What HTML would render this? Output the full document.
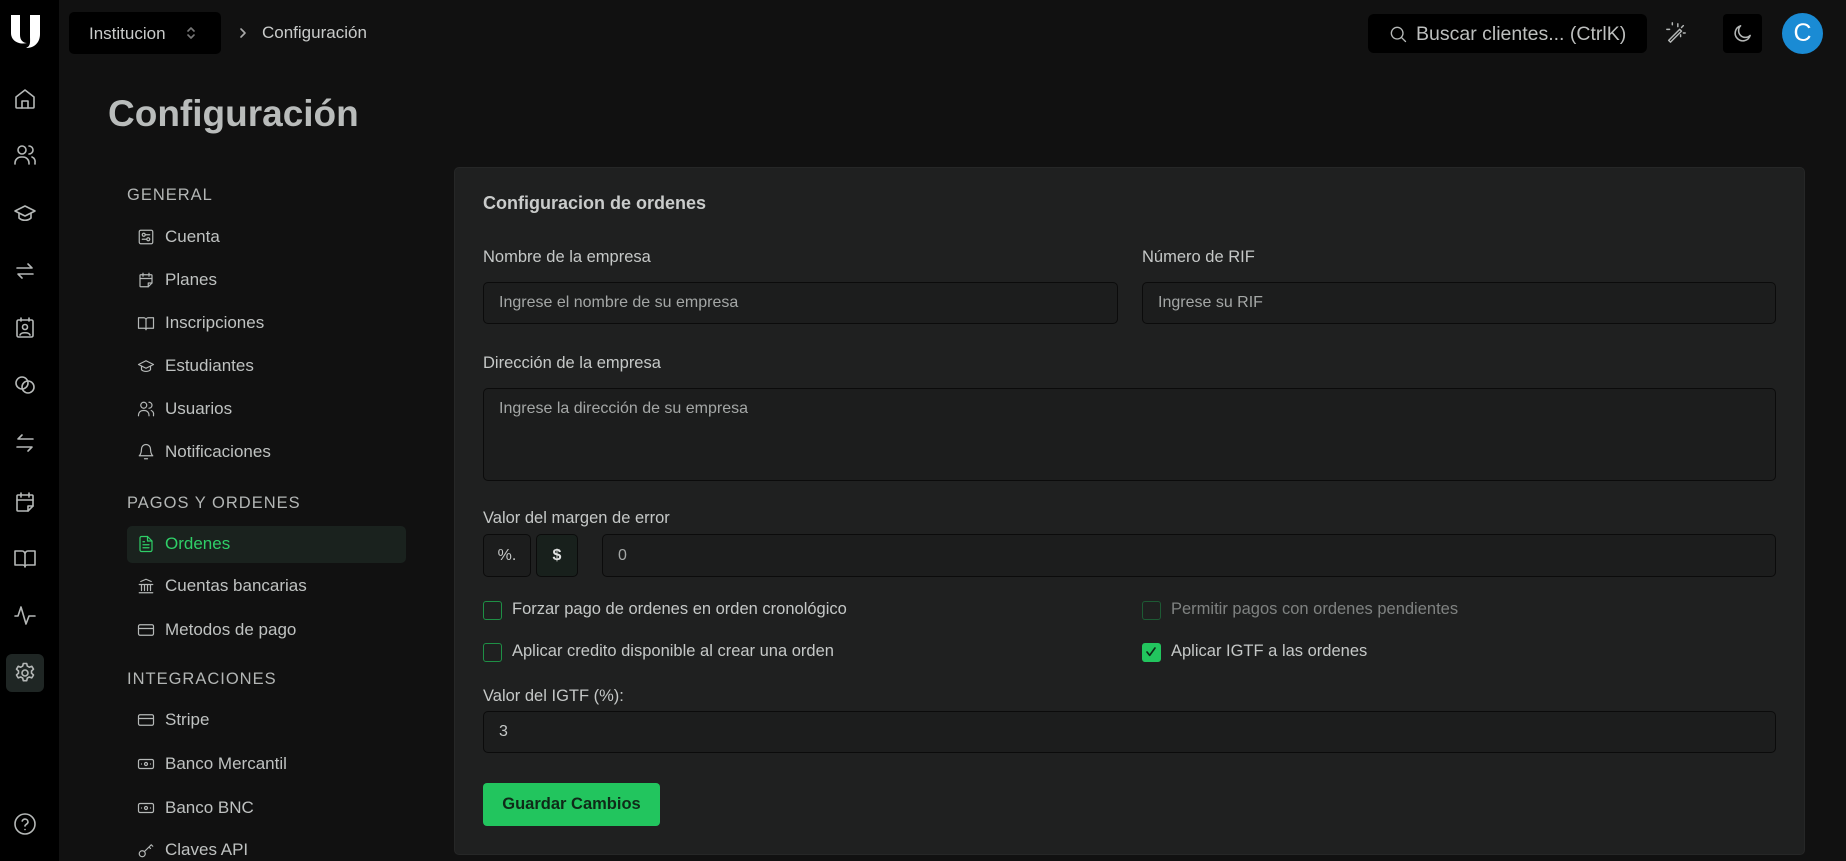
<!DOCTYPE html>
<html><head><meta charset="utf-8"><style>
*{box-sizing:border-box;margin:0;padding:0}
body{width:1846px;height:861px;overflow:hidden;background:#111111;font-family:"Liberation Sans",sans-serif;color:#c9cbca;position:relative}
.abs{position:absolute}
.rail{left:0;top:0;width:59px;height:861px;background:#000}
.ri{position:absolute;left:13px;width:24px;height:24px}
svg{fill:none;stroke:#b5b8b7;stroke-width:1.6;stroke-linecap:round;stroke-linejoin:round}
.nav{position:absolute;left:137px;font-size:17px;color:#bfc2c1;display:flex;align-items:center}
.nav svg{width:18px;height:18px;margin-right:10px}
.sec{position:absolute;left:127px;font-size:16.5px;letter-spacing:1px;color:#b3b6b5}
.lbl{position:absolute;font-size:16.5px;color:#c5c8c7}
.inp{position:absolute;background:#1c1d1d;border:1px solid #0b0b0b;border-radius:5px;font-size:16px;color:#a4a7a6;padding-left:15px;display:flex;align-items:center}
.cb{position:absolute;width:19px;height:19px;border:1.5px solid #1e8f45;border-radius:3px}
.ct{position:absolute;font-size:16.5px;color:#c5c8c7}
</style></head><body>
<div class="abs rail"></div>
<div class="abs" style="left:10px;top:14px;width:32px;height:36px;">
<svg viewBox="0 0 32 36" style="width:32px;height:36px;stroke:none;fill:#fff"><path d="M1 1h9v20c0 5 3 8 7 8-8 2-16-2-16-10z"/><path d="M20 1h10v19c0 9-6 14-14 14 5-2 4-6 4-12z"/></svg></div>
<svg class="ri" style="top:87px" viewBox="0 0 24 24"><path d="M3 10l9-7 9 7v10a1 1 0 0 1-1 1H4a1 1 0 0 1-1-1z"/><path d="M9 21v-7h6v7"/></svg>
<svg class="ri" style="top:143px" viewBox="0 0 24 24"><circle cx="9" cy="7" r="4"/><path d="M2 21v-1a6 6 0 0 1 6-6h2a6 6 0 0 1 6 6v1"/><path d="M16 3a4 4 0 0 1 0 8M19 14a5 5 0 0 1 3 6v1"/></svg>
<svg class="ri" style="top:201px" viewBox="0 0 24 24"><path d="M22 10L12 5 2 10l10 5 10-5z"/><path d="M6 12v5c3 3 9 3 12 0v-5"/></svg>
<svg class="ri" style="top:259px" viewBox="0 0 24 24"><path d="M4 9h15l-4-4M20 15H5l4 4"/></svg>
<svg class="ri" style="top:316px" viewBox="0 0 24 24"><rect x="4" y="4" width="16" height="17" rx="1.5"/><path d="M8 2v3M16 2v3"/><circle cx="12" cy="11" r="2.5"/><path d="M7 19c1-3 9-3 10 0"/></svg>
<svg class="ri" style="top:373px" viewBox="0 0 24 24"><circle cx="9" cy="10" r="6"/><circle cx="15" cy="14" r="6"/></svg>
<svg class="ri" style="top:431px" viewBox="0 0 24 24"><path d="M20 8H5l4-4M4 16h15l-4 4"/></svg>
<svg class="ri" style="top:490px" viewBox="0 0 24 24"><path d="M15 21H5a1 1 0 0 1-1-1V6a1 1 0 0 1 1-1h14a1 1 0 0 1 1 1v10z"/><path d="M8 3v4M16 3v4M4 10h16M15 21v-5h5"/></svg>
<svg class="ri" style="top:546px" viewBox="0 0 24 24"><path d="M2 5h7a3 3 0 0 1 3 3v13a2 2 0 0 0-2-2H2zM22 5h-7a3 3 0 0 0-3 3v13a2 2 0 0 1 2-2h8z"/></svg>
<svg class="ri" style="top:603px" viewBox="0 0 24 24"><path d="M2 13h3l3-9 5 17 3-8h6"/></svg>
<div class="abs" style="left:6px;top:654px;width:38px;height:38px;background:#1f2624;border-radius:6px"></div>
<svg class="ri" style="top:661px" viewBox="0 0 24 24"><circle cx="12" cy="12" r="3"/><path d="M10.3 2.5h3.4l.6 2.6 2 1.1 2.5-.9 1.7 2.9-2 1.8v2.2l2 1.8-1.7 2.9-2.5-.9-2 1.1-.6 2.6h-3.4l-.6-2.6-2-1.1-2.5.9-1.7-2.9 2-1.8v-2.2l-2-1.8 1.7-2.9 2.5.9 2-1.1z"/></svg>
<svg class="ri" style="top:812px" viewBox="0 0 24 24"><circle cx="12" cy="12" r="10"/><path d="M9.2 9a3 3 0 0 1 5.8 1c0 2-3 2.5-3 4"/><path d="M12 17.5h.01"/></svg>

<div class="abs" style="left:69px;top:12px;width:152px;height:42px;background:#000;border-radius:5px;font-size:17px;color:#c9cbca;padding:12px 0 0 20px">Institucion</div>
<svg class="abs" style="left:184px;top:25px;width:14px;height:16px;stroke:#777" viewBox="0 0 14 16"><path d="M4 6l3-3 3 3M4 10l3 3 3-3"/></svg>
<svg class="abs" style="left:236px;top:26px;width:14px;height:14px;stroke:#aaa" viewBox="0 0 14 14"><path d="M5 3l4 4-4 4"/></svg>
<div class="abs" style="left:262px;top:23px;font-size:17px;color:#c9cbca">Configuración</div>
<div class="abs" style="left:1368px;top:14px;width:279px;height:39px;background:#000;border-radius:6px;font-size:19.5px;color:#bdbfbe;padding:9px 0 0 48px">Buscar clientes... (CtrlK)</div>
<svg class="abs" style="left:1388px;top:24px;width:20px;height:20px" viewBox="0 0 24 24"><circle cx="11" cy="11" r="7"/><path d="M21 21l-5-5"/></svg>
<svg class="abs" style="left:1665px;top:22px;width:22px;height:22px" viewBox="0 0 24 24"><path d="M4 20L16 8l2 2L6 22z"/><path d="M14 5V2M18 6l2-2M5 8H2M8 3V1M20 12h2M17 14v2"/></svg>
<div class="abs" style="left:1723px;top:14px;width:39px;height:39px;background:#000;border-radius:4px"></div>
<svg class="abs" style="left:1731px;top:22px;width:23px;height:23px" viewBox="0 0 24 24"><path d="M20 14A8 8 0 1 1 10 4a6 6 0 0 0 10 10z"/></svg>
<div class="abs" style="left:1782px;top:13px;width:41px;height:41px;border-radius:50%;background:#1a8bd4;color:#fff;font-size:25px;text-align:center;line-height:41px">C</div>

<div class="abs" style="left:108px;top:93px;font-size:37px;font-weight:bold;color:#b9bcbb">Configuración</div>

<div class="sec" style="top:186px">GENERAL</div>
<div class="nav" style="top:227px"><svg viewBox="0 0 24 24"><rect x="3" y="3" width="18" height="18" rx="2"/><circle cx="9" cy="9" r="2"/><circle cx="15" cy="15" r="2"/><path d="M11 9h6M7 15h6"/></svg>Cuenta</div>
<div class="nav" style="top:270px"><svg viewBox="0 0 24 24"><path d="M15 21H5a1 1 0 0 1-1-1V6a1 1 0 0 1 1-1h14a1 1 0 0 1 1 1v10z"/><path d="M8 3v4M16 3v4M4 10h16M15 21v-5h5"/></svg>Planes</div>
<div class="nav" style="top:313px"><svg viewBox="0 0 24 24"><path d="M2 5h7a3 3 0 0 1 3 3v13a2 2 0 0 0-2-2H2zM22 5h-7a3 3 0 0 0-3 3v13a2 2 0 0 1 2-2h8z"/></svg>Inscripciones</div>
<div class="nav" style="top:356px"><svg viewBox="0 0 24 24"><path d="M22 10L12 5 2 10l10 5 10-5z"/><path d="M6 12v5c3 3 9 3 12 0v-5"/></svg>Estudiantes</div>
<div class="nav" style="top:399px"><svg viewBox="0 0 24 24"><circle cx="9" cy="7" r="4"/><path d="M2 21v-1a6 6 0 0 1 6-6h2a6 6 0 0 1 6 6v1M16 3a4 4 0 0 1 0 8M19 14a5 5 0 0 1 3 6v1"/></svg>Usuarios</div>
<div class="nav" style="top:442px"><svg viewBox="0 0 24 24"><path d="M6 8a6 6 0 0 1 12 0c0 7 3 9 3 9H3s3-2 3-9M10 21h4"/></svg>Notificaciones</div>
<div class="sec" style="top:494px">PAGOS Y ORDENES</div>
<div class="abs" style="left:127px;top:526px;width:279px;height:37px;background:#1a221e;border-radius:5px"></div>
<div class="nav" style="top:534px;color:#2fcf68"><svg viewBox="0 0 24 24" style="stroke:#2fcf68"><path d="M14 2H6a2 2 0 0 0-2 2v16a2 2 0 0 0 2 2h12a2 2 0 0 0 2-2V8z"/><path d="M14 2v6h6M8 13h8M8 17h8M8 9h2"/></svg>Ordenes</div>
<div class="nav" style="top:576px"><svg viewBox="0 0 24 24"><path d="M3 21h18M3 10h18M5 6l7-3 7 3M6 10v8M10 10v8M14 10v8M18 10v8"/></svg>Cuentas bancarias</div>
<div class="nav" style="top:620px"><svg viewBox="0 0 24 24"><rect x="2" y="5" width="20" height="14" rx="2"/><path d="M2 10h20"/></svg>Metodos de pago</div>
<div class="sec" style="top:670px">INTEGRACIONES</div>
<div class="nav" style="top:710px"><svg viewBox="0 0 24 24"><rect x="2" y="5" width="20" height="14" rx="2"/><path d="M2 10h20"/></svg>Stripe</div>
<div class="nav" style="top:754px"><svg viewBox="0 0 24 24"><rect x="2" y="6" width="20" height="12" rx="2"/><circle cx="12" cy="12" r="2"/><path d="M6 12h.01M18 12h.01"/></svg>Banco Mercantil</div>
<div class="nav" style="top:798px"><svg viewBox="0 0 24 24"><rect x="2" y="6" width="20" height="12" rx="2"/><circle cx="12" cy="12" r="2"/><path d="M6 12h.01M18 12h.01"/></svg>Banco BNC</div>
<div class="nav" style="top:840px"><svg viewBox="0 0 24 24"><circle cx="7" cy="17" r="4"/><path d="M10 14l9-9M16 8l2 2M19 5l2 2"/></svg>Claves API</div>

<div class="abs" style="left:454px;top:167px;width:1351px;height:688px;background:#1f2020;border-radius:5px;border:1px solid #262727"></div>
<div class="abs" style="left:483px;top:193px;font-size:18px;font-weight:bold;color:#c9cbca">Configuracion de ordenes</div>
<div class="lbl" style="left:483px;top:248px">Nombre de la empresa</div>
<div class="lbl" style="left:1142px;top:248px">Número de RIF</div>
<div class="inp" style="left:483px;top:282px;width:635px;height:42px">Ingrese el nombre de su empresa</div>
<div class="inp" style="left:1142px;top:282px;width:634px;height:42px">Ingrese su RIF</div>
<div class="lbl" style="left:483px;top:354px">Dirección de la empresa</div>
<div class="inp" style="left:483px;top:388px;width:1293px;height:93px;align-items:flex-start;padding-top:11px">Ingrese la dirección de su empresa</div>
<div class="lbl" style="left:483px;top:509px">Valor del margen de error</div>
<div class="inp" style="left:483px;top:534px;width:48px;height:43px;padding:0;justify-content:center;color:#c5c8c7">%.</div>
<div class="inp" style="left:536px;top:534px;width:42px;height:43px;padding:0;justify-content:center;color:#e2e4e3;background:#18201c;font-weight:bold">$</div>
<div class="inp" style="left:602px;top:534px;width:1174px;height:43px">0</div>
<div class="cb" style="left:483px;top:601px"></div>
<div class="ct" style="left:512px;top:600px">Forzar pago de ordenes en orden cronológico</div>
<div class="cb" style="left:1142px;top:601px;border-color:#1d5a34"></div>
<div class="ct" style="left:1171px;top:600px;color:#7f8281">Permitir pagos con ordenes pendientes</div>
<div class="cb" style="left:483px;top:643px"></div>
<div class="ct" style="left:512px;top:642px">Aplicar credito disponible al crear una orden</div>
<div class="cb" style="left:1142px;top:643px;background:#22c55e;border-color:#22c55e"><svg viewBox="0 0 24 24" style="width:16px;height:16px;stroke:#0d2a17;stroke-width:2.5"><path d="M6 12l4 5 8-11"/></svg></div>
<div class="ct" style="left:1171px;top:642px">Aplicar IGTF a las ordenes</div>
<div class="lbl" style="left:483px;top:687px">Valor del IGTF (%):</div>
<div class="inp" style="left:483px;top:711px;width:1293px;height:42px;color:#c5c8c7">3</div>
<div class="abs" style="left:483px;top:783px;width:177px;height:43px;background:#22c55e;border-radius:4px;color:#0f2a18;font-size:16.5px;font-weight:bold;text-align:center;line-height:43px">Guardar Cambios</div>
</body></html>
